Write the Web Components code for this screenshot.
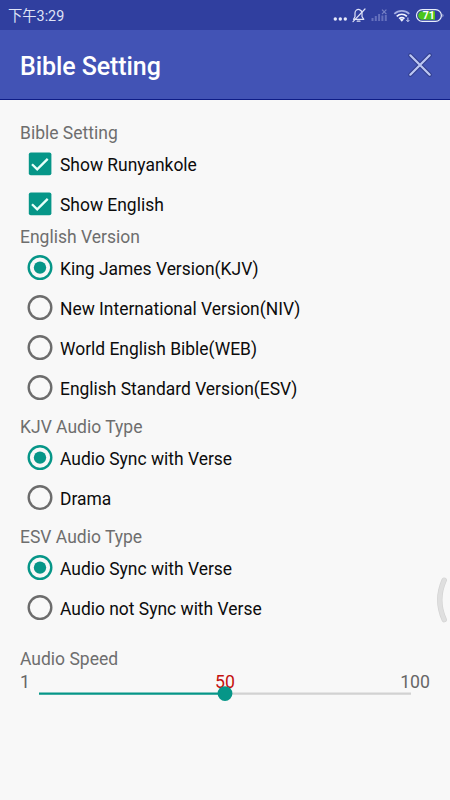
<!DOCTYPE html>
<html lang="en">
<head>
<meta charset="utf-8">
<title>Bible Setting</title>
<style>
  body {
    margin: 0;
    width: 450px;
    height: 800px;
    overflow: hidden;
    background: #f8f8f8;
    font-family: Roboto, "Noto Sans CJK SC", sans-serif;
  }
</style>
</head>
<body>
<settings-screen>
  <status-bar slot="top" time="下午3:29" battery="71"></status-bar>
  <title-bar slot="top">Bible Setting</title-bar>

  <setting-group>
    <span slot="title">Bible Setting</span>
    <check-option>Show Runyankole</check-option>
    <check-option>Show English</check-option>
  </setting-group>
  <setting-group>
    <span slot="title">English Version</span>
    <radio-option checked>King James Version(KJV)</radio-option>
    <radio-option>New International Version(NIV)</radio-option>
    <radio-option>World English Bible(WEB)</radio-option>
    <radio-option>English Standard Version(ESV)</radio-option>
  </setting-group>
  <setting-group style="--space: 6px">
    <span slot="title">KJV Audio Type</span>
    <radio-option checked>Audio Sync with Verse</radio-option>
    <radio-option>Drama</radio-option>
  </setting-group>
  <setting-group style="--space: 6px">
    <span slot="title">ESV Audio Type</span>
    <radio-option checked>Audio Sync with Verse</radio-option>
    <radio-option>Audio not Sync with Verse</radio-option>
  </setting-group>
  <setting-group style="--space: 18px">
    <span slot="title">Audio Speed</span>
    <speed-slider min="1" value="50" max="100"></speed-slider>
  </setting-group>

  <edge-handle slot="overlay"></edge-handle>
</settings-screen>

<script>
class BaseElement extends HTMLElement {
  constructor() {
    super();
    this.attachShadow({mode: 'open'});
  }
  getTemplate() {
    const template = document.createElement('template');
    template.innerHTML = `${this.getStyles()}${this.getMarkup()}`;
    return template;
  }
  connectedCallback() {
    if (this.shadowRoot.childNodes.length) return;
    this.shadowRoot.appendChild(this.getTemplate().content.cloneNode(true));
  }
}

class SettingsScreen extends BaseElement {
  getMarkup() {
    return `
      <header><slot name="top"></slot></header>
      <main><slot></slot></main>
      <slot name="overlay"></slot>
    `;
  }
  getStyles() {
    return `
      <style>
        :host {
          display: flex;
          flex-direction: column;
          position: relative;
          height: 800px;
          background: #f8f8f8;
        }
        main {
          padding: 20px 20px 0;
        }
      </style>
    `;
  }
}

class StatusBar extends BaseElement {
  getMarkup() {
    return `
      <span class="time">${this.getAttribute('time')}</span>
      <svg width="118" height="30" viewBox="0 0 118 30" fill="none">
        <g fill="#e6e9fa">
          <circle cx="3.3" cy="19" r="1.7"/><circle cx="8.3" cy="19" r="1.7"/><circle cx="13.3" cy="19" r="1.7"/>
        </g>
        <g stroke="#dfe3f8" stroke-width="1.2" stroke-linecap="round" stroke-linejoin="round">
          <path d="M21.5 19.3h10.3l-1.8-2.6v-3.2c0-2-1-3.4-2.6-3.9-2.3-.7-4.4 1-4.4 3.5v3.6z"/>
          <path d="M25.2 21.2h2.8M21 21.6 33 9"/>
        </g>
        <g fill="#6570bd">
          <path d="M39.5 18h2v3h-2zM42.8 16h2v5h-2zM46.1 14h2v7h-2zM49.4 15.5h2v5.5h-2zM52.8 15h2v6h-2z"/>
        </g>
        <path d="m50 9.7 4.4 4.4m0-4.4L50 14.1" stroke="#7680c5" stroke-width="1.2"/>
        <g stroke="#f2f4ff" stroke-width="1.7">
          <path d="M62.3 13.9c4.3-4 10.7-4 15 0" stroke="#a5afe4"/>
          <path d="M64.7 16.3c3-2.7 7.2-2.7 10.2 0"/>
          <path d="M67.1 18.7c1.6-1.4 3.8-1.4 5.4 0"/>
        </g>
        <path d="m67.8 19.6 2 2.1 2-2.1c-1.2-1-2.8-1-4 0z" fill="#f2f4ff"/>
        <path d="M75.9 17.5v4M74.4 20l1.5 1.7 1.5-1.7" stroke="#cbd2f5"/>
        <rect x="84.5" y="9.7" width="24.9" height="11.6" rx="5.8" stroke="#e8eefa" stroke-width="1.2"/>
        <path d="M90.4 11.2H103v8.6H90.4a4.3 4.3 0 0 1 0-8.6z" fill="#4bc51c"/>
        <path d="M110.6 13.7c1 .8 1 2.8 0 3.6z" fill="#e8eefa"/>
        <text x="96.8" y="19.2" text-anchor="middle" font-family="Roboto, sans-serif" font-size="10.5" font-weight="700" fill="#fff">${this.getAttribute('battery')}</text>
      </svg>
    `;
  }
  getStyles() {
    return `
      <style>
        :host {
          display: flex;
          justify-content: space-between;
          height: 30px;
          background: #303f9f;
          color: #dfe3f6;
        }
        .time {
          padding-left: 8px;
          font-size: 14.3px;
          line-height: 33px;
        }
        svg {
          display: block;
        }
      </style>
    `;
  }
}

class TitleBar extends BaseElement {
  getMarkup() {
    return `
      <h1><slot></slot></h1>
      <svg width="26" height="26" viewBox="0 0 26 26" fill="none" stroke-linecap="round">
        <path d="M3.3 3.3l19.4 19.4M22.7 3.3 3.3 22.7" stroke="#303d8c" stroke-width="4.2"/>
        <path d="M3.3 3.3l19.4 19.4M22.7 3.3 3.3 22.7" stroke="#bcc7f3" stroke-width="2.2"/>
      </svg>
    `;
  }
  getStyles() {
    return `
      <style>
        :host {
          display: flex;
          align-items: center;
          justify-content: space-between;
          box-sizing: border-box;
          height: 70px;
          padding: 1px 17px 0 20px;
          background: #4253b5;
          border-bottom: 1px solid #0e1c86;
          color: #fff;
        }
        h1 {
          margin: 0;
          padding-top: 2px;
          font-size: 25px;
          font-weight: 500;
          letter-spacing: -0.08px;
        }
      </style>
    `;
  }
}

class SettingGroup extends BaseElement {
  getMarkup() {
    return `
      <h2><slot name="title"></slot></h2>
      <slot></slot>
    `;
  }
  getStyles() {
    return `
      <style>
        :host {
          display: block;
          padding-top: var(--space, 0);
        }
        h2 {
          box-sizing: border-box;
          height: 24px;
          margin: 0;
          padding-top: 1px;
          color: #6e6e6e;
          font-size: 17.5px;
          font-weight: 400;
          line-height: 24px;
        }
      </style>
    `;
  }
}

class OptionElement extends BaseElement {
  getMarkup() {
    return `
      ${this.getIcon()}
      <span><slot></slot></span>
    `;
  }
  getStyles() {
    return `
      <style>
        :host {
          display: flex;
          align-items: center;
          gap: 7px;
          height: 40px;
          padding-left: 7px;
          color: #0c0c0c;
          font-size: 17.45px;
          line-height: 22px;
        }
        span {
          padding-top: 1px;
        }
      </style>
    `;
  }
}

class CheckOption extends OptionElement {
  getIcon() {
    return `
      <svg width="26" height="26" viewBox="0 0 26 26">
        <rect x="1.8" y="1.6" width="22.6" height="22.6" rx="2" fill="#069688"/>
        <path d="m5 13.2 5.2 5.2L20.7 7.9" fill="none" stroke="#e9fffa" stroke-width="2.3"/>
      </svg>
    `;
  }
}

class RadioOption extends OptionElement {
  getIcon() {
    const on = this.hasAttribute('checked');
    return `
      <svg width="26" height="26" viewBox="0 0 26 26">
        <circle cx="13" cy="12.6" r="11.3" fill="none" stroke="${on ? '#069688' : '#6c6c6c'}" stroke-width="2.4"/>
        ${on ? '<circle cx="13" cy="12.6" r="6.2" fill="#069688"/>' : ''}
      </svg>
    `;
  }
}

class SpeedSlider extends BaseElement {
  getMarkup() {
    const min = this.getAttribute('min');
    const value = this.getAttribute('value');
    const max = this.getAttribute('max');
    return `
      <div class="labels">
        <span>${min}</span><span class="value">${value}</span><span class="max">${max}</span>
      </div>
      <svg width="410" height="16" viewBox="0 0 410 16">
        <path d="M205 8.6h186" stroke="#d2d2d2" stroke-width="2.4"/>
        <path d="M19 8.6h186" stroke="#069688" stroke-width="2.4"/>
        <circle cx="205" cy="8.6" r="7.4" fill="#069688"/>
      </svg>
    `;
  }
  getStyles() {
    return `
      <style>
        :host {
          display: block;
          color: #666;
          font-size: 17.7px;
        }
        .labels {
          display: grid;
          grid-template-columns: 1fr 1fr 1fr;
          height: 15px;
          line-height: 24px;
        }
        .value {
          color: #c4100e;
          text-align: center;
        }
        .max {
          text-align: right;
        }
        /* the thumb is painted over the value label */
        svg {
          display: block;
          position: relative;
        }
      </style>
    `;
  }
}

class EdgeHandle extends BaseElement {
  getMarkup() {
    return `
      <svg width="14" height="48" viewBox="0 0 14 48">
        <path d="M8.2 4.2C2.5 17 2.5 31 8.2 43.6" fill="none" stroke="#d3d3d3" stroke-width="5.4" stroke-linecap="round"/>
        <path d="M8.2 4.2C2.5 17 2.5 31 8.2 43.6" fill="none" stroke="#dfdfdf" stroke-width="4" stroke-linecap="round"/>
      </svg>
    `;
  }
  getStyles() {
    return `
      <style>
        :host {
          display: block;
          position: absolute;
          right: 0;
          top: 576px;
        }
        svg {
          display: block;
        }
      </style>
    `;
  }
}

customElements.define('settings-screen', SettingsScreen);
customElements.define('status-bar', StatusBar);
customElements.define('title-bar', TitleBar);
customElements.define('setting-group', SettingGroup);
customElements.define('check-option', CheckOption);
customElements.define('radio-option', RadioOption);
customElements.define('speed-slider', SpeedSlider);
customElements.define('edge-handle', EdgeHandle);
</script>
</body>
</html>
